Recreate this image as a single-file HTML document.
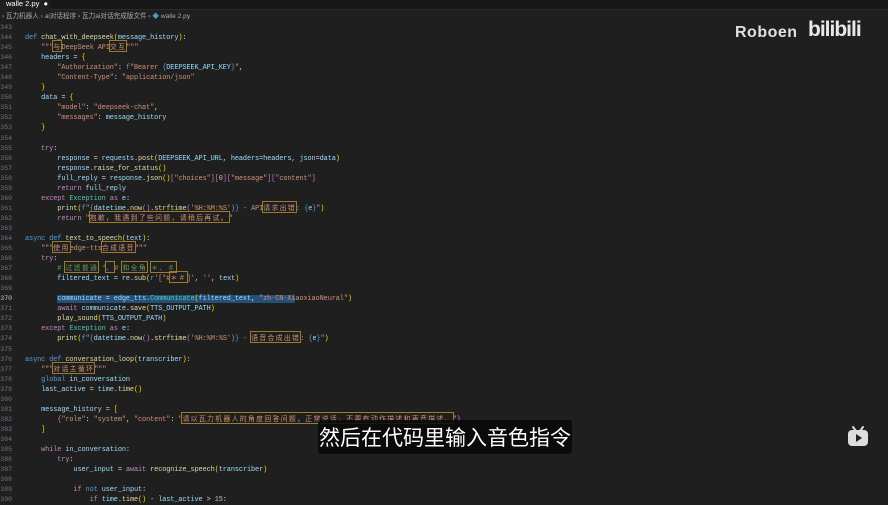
<!DOCTYPE html>
<html><head><meta charset="utf-8"><style>
body{margin:0;width:888px;height:500px;background:#1f1f1f;overflow:hidden;position:relative;font-family:"Liberation Sans","Noto Sans CJK SC",sans-serif}
.tabs{position:absolute;left:0;top:0;width:888px;height:9px;background:#181818;border-bottom:1px solid #2b2b2b}
.tab{position:absolute;left:0;top:0;width:50px;height:10px;background:#1f1f1f;color:#fff;font-size:7.5px;line-height:8px;padding-left:6px;box-sizing:border-box}
.crumb{position:absolute;left:0;top:12px;color:#a9a9a9;font-size:6.6px;line-height:10px;white-space:nowrap}
pre{position:absolute;left:0;top:23px;margin:0;font-family:"Liberation Mono",monospace;font-size:6.9px;line-height:10.04px;color:#d4d4d4}
pre span{line-height:0}
.ln{position:absolute;left:0;top:23px;margin:0;width:12px;text-align:right;font-family:"Liberation Mono",monospace;font-size:6.5px;line-height:10.04px;color:#6e7681}
.code{left:25px;letter-spacing:-0.1px}
.k{color:#569cd6}.c{color:#c586c0}.f{color:#dcdcaa}.s{color:#ce9178}.v{color:#9cdcfe}.t{color:#4ec9b0}.b{color:#ffd700}.p{color:#da70d6}.n{color:#b5cea8}.g{color:#6a9955}
.z{outline:1px solid #a07a2c;font-family:"Noto Sans CJK SC",sans-serif;letter-spacing:1.3px}
.sel{background:#264f78}
.sub{position:absolute;left:318px;top:420px;width:254px;height:34px;background:rgba(8,8,8,.85);border-radius:3px;color:#fff;font-family:"Noto Sans CJK SC",sans-serif;font-size:21px;line-height:34px;text-align:center;white-space:nowrap}
.logo{position:absolute;left:735px;top:24px;color:#e0e0e0;font-size:16px;font-weight:bold;letter-spacing:.5px}
.bili{position:absolute;left:808px;top:18px;color:#e8e8e8;font-size:21px;font-weight:bold;font-family:"Liberation Sans",sans-serif;letter-spacing:-1px}
</style></head><body>
<div class="tabs"><div class="tab">walle 2.py &nbsp;●</div></div>
<div class="crumb">&nbsp;› 瓦力机器人 › ai对话程序 › 瓦力ai对话完成版文件 › <span style="color:#519aba">◆</span> walle 2.py</div>
<pre class="ln">343
344
345
346
347
348
349
350
351
352
353
354
355
356
357
358
359
360
361
362
363
364
365
366
367
368
369
<span style="color:#ccc">370</span>
371
372
373
374
375
376
377
378
379
380
381
382
383
384
385
386
387
388
389
390</pre>
<pre class="code">

<span class="k">def</span> <span class="f">chat_with_deepseek</span><span class="b">(</span><span class="v">message_history</span><span class="b">)</span>:
    <span class="s">"""<span class="z">与</span>DeepSeek API<span class="z">交互</span>"""</span>
    <span class="v">headers</span> = <span class="b">{</span>
        <span class="s">"Authorization"</span>: <span class="k">f</span><span class="s">"Bearer </span><span class="k">{</span><span class="v">DEEPSEEK_API_KEY</span><span class="k">}</span><span class="s">"</span>,
        <span class="s">"Content-Type"</span>: <span class="s">"application/json"</span>
    <span class="b">}</span>
    <span class="v">data</span> = <span class="b">{</span>
        <span class="s">"model"</span>: <span class="s">"deepseek-chat"</span>,
        <span class="s">"messages"</span>: <span class="v">message_history</span>
    <span class="b">}</span>

    <span class="c">try</span>:
        <span class="v">response</span> = <span class="v">requests</span>.<span class="f">post</span><span class="b">(</span><span class="v">DEEPSEEK_API_URL</span>, <span class="v">headers</span>=<span class="v">headers</span>, <span class="v">json</span>=<span class="v">data</span><span class="b">)</span>
        <span class="v">response</span>.<span class="f">raise_for_status</span><span class="b">()</span>
        <span class="v">full_reply</span> = <span class="v">response</span>.<span class="f">json</span><span class="b">()</span><span class="p">[</span><span class="s">"choices"</span><span class="p">][</span><span class="n">0</span><span class="p">][</span><span class="s">"message"</span><span class="p">][</span><span class="s">"content"</span><span class="p">]</span>
        <span class="c">return</span> <span class="v">full_reply</span>
    <span class="c">except</span> <span class="t">Exception</span> <span class="c">as</span> <span class="v">e</span>:
        <span class="f">print</span><span class="b">(</span><span class="k">f</span><span class="s">"</span><span class="k">{</span><span class="v">datetime</span>.<span class="f">now</span><span class="p">()</span>.<span class="f">strftime</span><span class="p">(</span><span class="s">'%H:%M:%S'</span><span class="p">)</span><span class="k">}</span><span class="s"> - API<span class="z">请求出错</span>: </span><span class="k">{</span><span class="v">e</span><span class="k">}</span><span class="s">"</span><span class="b">)</span>
        <span class="c">return</span> <span class="s">"<span class="z">抱歉，我遇到了些问题，请稍后再试。</span>"</span>

<span class="k">async</span> <span class="k">def</span> <span class="f">text_to_speech</span><span class="b">(</span><span class="v">text</span><span class="b">)</span>:
    <span class="s">"""<span class="z">使用</span>edge-tts<span class="z">合成语音</span>"""</span>
    <span class="c">try</span>:
        <span class="g"># <span class="z">过滤普通</span> *<span class="z">、</span># <span class="z">和全角</span> <span class="z">＊、＃</span></span>
        <span class="v">filtered_text</span> = <span class="v">re</span>.<span class="f">sub</span><span class="b">(</span><span class="k">r</span><span class="s">'[*#<span class="z">＊＃</span>]'</span>, <span class="s">''</span>, <span class="v">text</span><span class="b">)</span>

        <span class="sel"><span class="v">communicate</span> = <span class="v">edge_tts</span>.<span class="t">Communicate</span><span class="b">(</span><span class="v">filtered_text</span>, <span class="s">"zh-CN-Xi</span></span><span class="s">aoxiaoNeural"</span><span class="b">)</span>
        <span class="c">await</span> <span class="v">communicate</span>.<span class="f">save</span><span class="b">(</span><span class="v">TTS_OUTPUT_PATH</span><span class="b">)</span>
        <span class="f">play_sound</span><span class="b">(</span><span class="v">TTS_OUTPUT_PATH</span><span class="b">)</span>
    <span class="c">except</span> <span class="t">Exception</span> <span class="c">as</span> <span class="v">e</span>:
        <span class="f">print</span><span class="b">(</span><span class="k">f</span><span class="s">"</span><span class="k">{</span><span class="v">datetime</span>.<span class="f">now</span><span class="p">()</span>.<span class="f">strftime</span><span class="p">(</span><span class="s">'%H:%M:%S'</span><span class="p">)</span><span class="k">}</span><span class="s"> - <span class="z">语音合成出错</span>: </span><span class="k">{</span><span class="v">e</span><span class="k">}</span><span class="s">"</span><span class="b">)</span>

<span class="k">async</span> <span class="k">def</span> <span class="f">conversation_loop</span><span class="b">(</span><span class="v">transcriber</span><span class="b">)</span>:
    <span class="s">"""<span class="z">对话主循环</span>"""</span>
    <span class="k">global</span> <span class="v">in_conversation</span>
    <span class="v">last_active</span> = <span class="v">time</span>.<span class="f">time</span><span class="b">()</span>

    <span class="v">message_history</span> = <span class="b">[</span>
        <span class="p">{</span><span class="s">"role"</span>: <span class="s">"system"</span>, <span class="s">"content"</span>: <span class="s">"<span class="z">请以瓦力机器人的角度回答问题，正常说话，不要有动作描述和声音描述。</span>"</span><span class="p">}</span>
    <span class="b">]</span>

    <span class="c">while</span> <span class="v">in_conversation</span>:
        <span class="c">try</span>:
            <span class="v">user_input</span> = <span class="c">await</span> <span class="f">recognize_speech</span><span class="b">(</span><span class="v">transcriber</span><span class="b">)</span>

            <span class="c">if</span> <span class="k">not</span> <span class="v">user_input</span>:
                <span class="c">if</span> <span class="v">time</span>.<span class="f">time</span><span class="b">()</span> - <span class="v">last_active</span> &gt; <span class="n">15</span>:</pre>
<div class="logo">Roboen</div>
<div class="bili">bilibili</div>
<div class="sub">然后在代码里输入音色指令</div>
<svg style="position:absolute;left:844px;top:423px" width="28" height="26" viewBox="0 0 28 26">
<path d="M9 4 L12 8 M19 4 L16 8" stroke="#ddd" stroke-width="2" stroke-linecap="round"/>
<rect x="4" y="7" width="20" height="16" rx="4" fill="#ddd"/>
<path d="M12 11 L18 15 L12 19 Z" fill="#222"/>
</svg>
</body></html>
